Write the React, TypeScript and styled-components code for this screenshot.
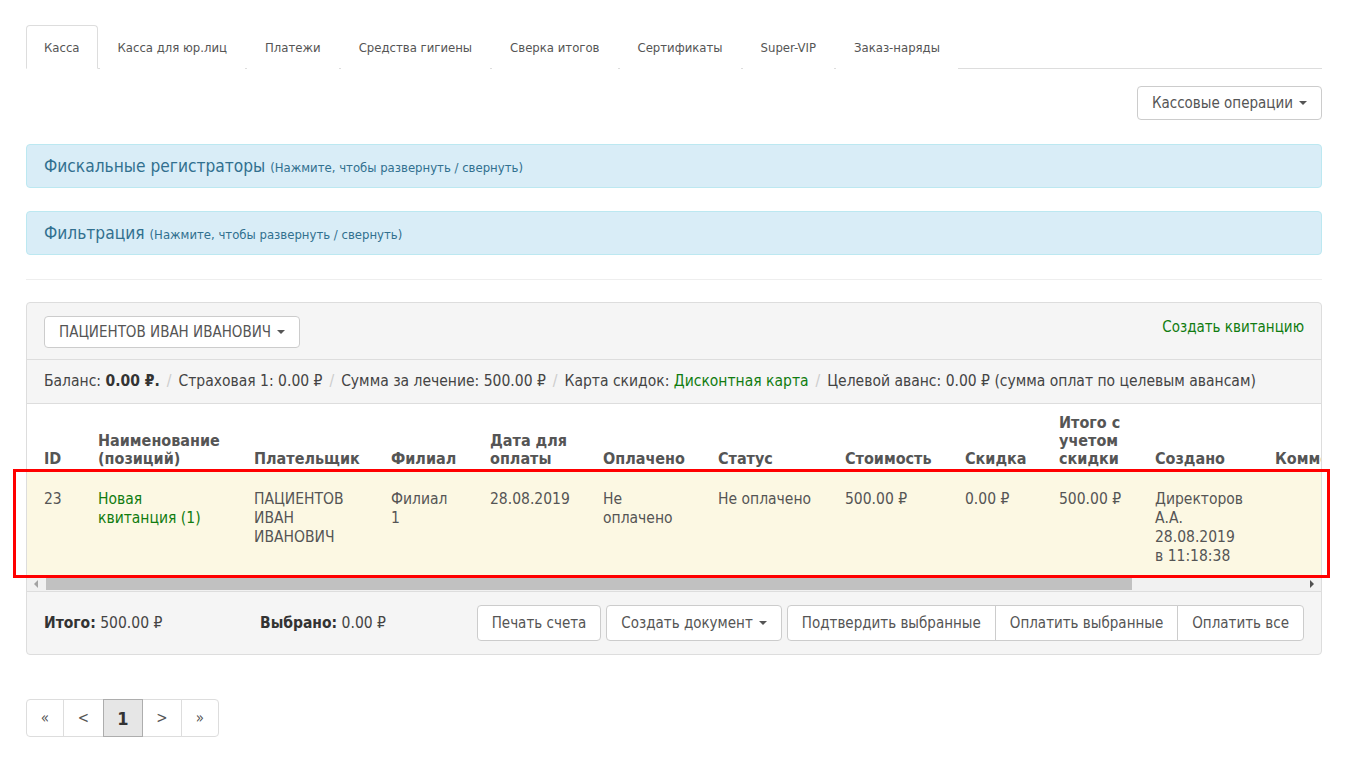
import styled, { createGlobalStyle } from "styled-components";

const GlobalStyle = createGlobalStyle`
  body {
    margin: 0;
    background: #fff;
    color: #555;
    font-family: "DejaVu Sans Condensed", "Liberation Sans Narrow", "Liberation Sans", sans-serif;
    font-size: 15px;
    line-height: 19px;
  }
  * { box-sizing: border-box; }
`;

const Page = styled.div`
  width: 1296px;
  margin: 0 0 0 26px;
  padding-top: 25px;
`;

const Tabs = styled.ul`
  display: flex;
  margin: 0;
  padding: 0;
  list-style: none;
  border-bottom: 1px solid #ddd;
`;

const Tab = styled.li<{ $active?: boolean }>`
  height: 44px;
  margin: 0 2px -1px 0;
  padding: 0 17px;
  line-height: 43px;
  font-size: 13px;
  color: #555;
  white-space: nowrap;
  border: 1px solid ${(p) => (p.$active ? "#ddd" : "transparent")};
  border-bottom-color: ${(p) => (p.$active ? "#fff" : "transparent")};
  border-radius: 4px 4px 0 0;
  background: #fff;
`;

const Toolbar = styled.div`
  display: flex;
  justify-content: flex-end;
  margin-top: 17px;
`;

const Button = styled.button<{ $h?: number }>`
  display: inline-flex;
  align-items: center;
  gap: 5px;
  height: ${(p) => p.$h ?? 34}px;
  padding: 0 14px;
  font: inherit;
  font-size: 15px;
  color: #555;
  white-space: nowrap;
  background: #fff;
  border: 1px solid #ccc;
  border-radius: 4px;
`;

const Caret = styled.span`
  display: inline-block;
  width: 0;
  height: 0;
  margin-left: 1px;
  border-top: 4px solid #555;
  border-left: 4px solid transparent;
  border-right: 4px solid transparent;
`;

const Collapse = styled.div<{ $gap: number }>`
  display: flex;
  align-items: baseline;
  gap: 5px;
  height: 44px;
  margin-top: ${(p) => p.$gap}px;
  padding: 11px 17px 0;
  background: #d9edf7;
  border: 1px solid #bce8f1;
  border-radius: 4px;
  color: #31708f;
  white-space: nowrap;
`;

const CollapseTitle = styled.span`
  font-size: 17.2px;
  line-height: 21px;
`;

const CollapseHint = styled.small`
  font-size: 13px;
`;

const Rule = styled.hr`
  margin: 24px 0 0;
  border: 0;
  border-top: 1px solid #eee;
`;

const PanelWrap = styled.div`
  position: relative;
  margin-top: 22px;
`;

const Panel = styled.div`
  background: #f5f5f5;
  border: 1px solid #ddd;
  border-radius: 4px;
  overflow: hidden;
`;

const PanelHead = styled.div`
  display: flex;
  justify-content: space-between;
  align-items: flex-start;
  height: 56px;
  padding: 13px 17px 0;
`;

const GreenLink = styled.a`
  color: #107c10;
  text-decoration: none;
`;

const CreateLink = styled(GreenLink)`
  margin-top: 2px;
`;

const InfoLine = styled.div`
  display: flex;
  align-items: center;
  height: 44px;
  padding: 0 17px;
  border-top: 1px solid #ddd;
  font-size: 15.5px;
  color: #444;
  white-space: nowrap;
`;

const Sep = styled.span`
  margin: 0 7px;
  color: #ccc;
`;

const Strong = styled.b`
  color: #333;
`;

const TableScroll = styled.div`
  overflow: hidden;
  background: #fff;
  border-top: 1px solid #ddd;
`;

const Table = styled.table<{ $w: number }>`
  width: ${(p) => p.$w}px;
  table-layout: fixed;
  border-collapse: collapse;
`;

const Th = styled.th`
  padding: 10px 17px 2px;
  text-align: left;
  vertical-align: bottom;
  font-size: 16px;
  font-weight: bold;
  line-height: 18px;
  color: #555;
  white-space: nowrap;
  border-bottom: 2px solid #ddd;
`;

const Row = styled.tr`
  background: #fcf8e3;
`;

const Td = styled.td`
  padding: 18px 17px 10px;
  vertical-align: top;
  font-size: 15.5px;
  color: #555;
  white-space: nowrap;
`;

const ScrollBar = styled.div`
  display: flex;
  align-items: center;
  height: 15px;
  background: #f1f1f1;
`;

const ScrollArrow = styled.span<{ $dir: "left" | "right" }>`
  width: 0;
  height: 0;
  margin: ${(p) => (p.$dir === "left" ? "0 8px 0 7px" : "0 7px 0 8px")};
  border-top: 4px solid transparent;
  border-bottom: 4px solid transparent;
  ${(p) =>
    p.$dir === "left"
      ? "border-right: 4px solid #a3a3a3;"
      : "border-left: 4px solid #505050;"}
`;

const Thumb = styled.div`
  width: 1086px;
  height: 13px;
  background: #c1c1c1;
`;

const ThumbSpace = styled.div`
  flex: 1;
`;

const Footer = styled.div`
  display: flex;
  align-items: center;
  height: 63px;
  padding: 0 17px;
  border-top: 1px solid #ddd;
  font-size: 15.5px;
  color: #444;
  white-space: nowrap;
`;

const Total = styled.span<{ $w: number }>`
  width: ${(p) => p.$w}px;
`;

const Actions = styled.div`
  display: flex;
  gap: 5px;
  margin-left: auto;
`;

const Group = styled.div`
  display: flex;
  & > button { border-radius: 0; margin-left: -1px; }
  & > button:first-child { border-radius: 4px 0 0 4px; margin-left: 0; }
  & > button:last-child { border-radius: 0 4px 4px 0; }
`;

const Marker = styled.div`
  position: absolute;
  left: -13px;
  top: 167px;
  width: 1317px;
  height: 109px;
  border: 3px solid #f00;
  pointer-events: none;
`;

const Pager = styled.ul`
  display: flex;
  margin: 44px 0 0;
  padding: 0;
  list-style: none;
`;

const PageItem = styled.li<{ $active?: boolean; $w: number }>`
  position: relative;
  z-index: ${(p) => (p.$active ? 1 : 0)};
  display: flex;
  align-items: center;
  justify-content: center;
  width: ${(p) => p.$w}px;
  height: 38px;
  margin-left: -1px;
  font-size: ${(p) => (p.$active ? 18 : 15)}px;
  font-weight: ${(p) => (p.$active ? "bold" : "normal")};
  color: ${(p) => (p.$active ? "#333" : "#555")};
  background: ${(p) => (p.$active ? "#e6e6e6" : "#fff")};
  border: 1px solid ${(p) => (p.$active ? "#adadad" : "#ddd")};
  &:first-child { margin-left: 0; border-radius: 4px 0 0 4px; }
  &:last-child { border-radius: 0 4px 4px 0; }
`;

const tabs = [
  "Касса",
  "Касса для юр.лиц",
  "Платежи",
  "Средства гигиены",
  "Сверка итогов",
  "Сертификаты",
  "Super-VIP",
  "Заказ-наряды",
];

const columns: [string[], number][] = [
  [["ID"], 54],
  [["Наименование", "(позиций)"], 156],
  [["Плательщик"], 137],
  [["Филиал"], 99],
  [["Дата для", "оплаты"], 113],
  [["Оплачено"], 115],
  [["Статус"], 127],
  [["Стоимость"], 120],
  [["Скидка"], 94],
  [["Итого с", "учетом", "скидки"], 96],
  [["Создано"], 120],
  [["Комментарий"], 180],
];

const tableWidth = columns.reduce((s, [, w]) => s + w, 0);

const cells: string[][] = [
  ["23"],
  ["Новая", "квитанция (1)"],
  ["ПАЦИЕНТОВ", "ИВАН", "ИВАНОВИЧ"],
  ["Филиал", "1"],
  ["28.08.2019"],
  ["Не", "оплачено"],
  ["Не оплачено"],
  ["500.00 ₽"],
  ["0.00 ₽"],
  ["500.00 ₽"],
  ["Директоров", "А.А.", "28.08.2019", "в 11:18:38"],
  [""],
];

function Lines({ lines }: { lines: string[] }) {
  return (
    <>
      {lines.map((l, i) => (
        <span key={i}>
          {i > 0 && <br />}
          {l}
        </span>
      ))}
    </>
  );
}

export default function App() {
  return (
    <>
      <GlobalStyle />
      <Page>
        <Tabs>
          {tabs.map((t, i) => (
            <Tab key={t} $active={i === 0}>
              {t}
            </Tab>
          ))}
        </Tabs>

        <Toolbar>
          <Button>
            Кассовые операции <Caret />
          </Button>
        </Toolbar>

        <Collapse $gap={24}>
          <CollapseTitle>Фискальные регистраторы</CollapseTitle>
          <CollapseHint>(Нажмите, чтобы развернуть / свернуть)</CollapseHint>
        </Collapse>

        <Collapse $gap={23}>
          <CollapseTitle>Фильтрация</CollapseTitle>
          <CollapseHint>(Нажмите, чтобы развернуть / свернуть)</CollapseHint>
        </Collapse>

        <Rule />

        <PanelWrap>
          <Panel>
            <PanelHead>
              <Button $h={32}>
                ПАЦИЕНТОВ ИВАН ИВАНОВИЧ <Caret />
              </Button>
              <CreateLink href="#">Создать квитанцию</CreateLink>
            </PanelHead>

            <InfoLine>
              Баланс:&nbsp;<Strong>0.00 ₽.</Strong>
              <Sep>/</Sep>
              Страховая 1: 0.00 ₽
              <Sep>/</Sep>
              Сумма за лечение: 500.00 ₽
              <Sep>/</Sep>
              Карта скидок:&nbsp;<GreenLink href="#">Дисконтная карта</GreenLink>
              <Sep>/</Sep>
              Целевой аванс: 0.00 ₽ (сумма оплат по целевым авансам)
            </InfoLine>

            <TableScroll>
              <Table $w={tableWidth}>
                <colgroup>
                  {columns.map(([name, w]) => (
                    <col key={name.join()} style={{ width: w }} />
                  ))}
                </colgroup>
                <thead>
                  <tr>
                    {columns.map(([name]) => (
                      <Th key={name.join()}>
                        <Lines lines={name} />
                      </Th>
                    ))}
                  </tr>
                </thead>
                <tbody>
                  <Row>
                    {cells.map((c, i) => (
                      <Td key={i}>
                        {i === 1 ? (
                          <GreenLink href="#">
                            <Lines lines={c} />
                          </GreenLink>
                        ) : (
                          <Lines lines={c} />
                        )}
                      </Td>
                    ))}
                  </Row>
                </tbody>
              </Table>
            </TableScroll>

            <ScrollBar>
              <ScrollArrow $dir="left" />
              <Thumb />
              <ThumbSpace />
              <ScrollArrow $dir="right" />
            </ScrollBar>

            <Footer>
              <Total $w={216}>
                <Strong>Итого:</Strong> 500.00 ₽
              </Total>
              <Total $w={200}>
                <Strong>Выбрано:</Strong> 0.00 ₽
              </Total>
              <Actions>
                <Button $h={36}>Печать счета</Button>
                <Button $h={36}>
                  Создать документ <Caret />
                </Button>
                <Group>
                  <Button $h={36}>Подтвердить выбранные</Button>
                  <Button $h={36}>Оплатить выбранные</Button>
                  <Button $h={36}>Оплатить все</Button>
                </Group>
              </Actions>
            </Footer>
          </Panel>
          <Marker />
        </PanelWrap>

        <Pager>
          <PageItem $w={38}>«</PageItem>
          <PageItem $w={41}>&lt;</PageItem>
          <PageItem $w={40} $active>
            1
          </PageItem>
          <PageItem $w={40}>&gt;</PageItem>
          <PageItem $w={38}>»</PageItem>
        </Pager>
      </Page>
    </>
  );
}
